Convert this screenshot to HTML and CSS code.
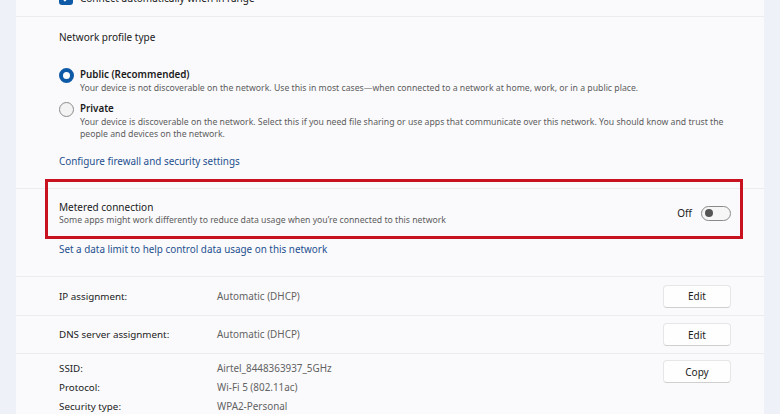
FILE: index.html
```html
<!DOCTYPE html>
<html lang="en">
<head>
<meta charset="utf-8">
<title>Network properties</title>
<link rel="stylesheet" href="styles.css">
</head>
<body>
<div class="shell">
  <div class="side"></div>
  <main class="card">
    <section class="sec sec-top">
      <div class="check-row">
        <span class="checkbox">
          <svg viewBox="0 0 14 14" width="14" height="14"><path d="M3.5 7.2 L6 9.6 L10.6 4.6" fill="none" stroke="#fff" stroke-width="1.5" stroke-linecap="round" stroke-linejoin="round"/></svg>
        </span>
        <span class="title">Connect automatically when in range</span>
      </div>
    </section>

    <section class="sec sec-profile">
      <div class="title heading">Network profile type</div>
      <div class="radio-row">
        <span class="radio on"></span>
        <div class="radio-text">
          <div class="title strong">Public (Recommended)</div>
          <div class="desc">Your device is not discoverable on the network. Use this in most cases—when connected to a network at home, work, or in a public place.</div>
        </div>
      </div>
      <div class="radio-row second">
        <span class="radio"></span>
        <div class="radio-text">
          <div class="title strong">Private</div>
          <div class="desc">Your device is discoverable on the network. Select this if you need file sharing or use apps that communicate over this network. You should know and trust the people and devices on the network.</div>
        </div>
      </div>
      <a class="link link-fw" href="#">Configure firewall and security settings</a>
    </section>

    <section class="sec sec-metered">
      <div class="metered-row">
        <div class="metered-text">
          <div class="title">Metered connection</div>
          <div class="desc">Some apps might work differently to reduce data usage when you’re connected to this network</div>
        </div>
        <div class="toggle-wrap">
          <span class="toggle-label">Off</span>
          <span class="toggle"><span class="knob"></span></span>
        </div>
      </div>
      <a class="link link-limit" href="#">Set a data limit to help control data usage on this network</a>
      <div class="highlight"></div>
    </section>

    <section class="sec prop-row">
      <span class="label">IP assignment:</span>
      <span class="value">Automatic (DHCP)</span>
      <button class="btn">Edit</button>
    </section>
    <section class="sec prop-row">
      <span class="label">DNS server assignment:</span>
      <span class="value">Automatic (DHCP)</span>
      <button class="btn">Edit</button>
    </section>
    <section class="sec props">
      <div class="props-grid">
        <span class="label">SSID:</span><span class="value">Airtel_8448363937_5GHz</span>
        <span class="label">Protocol:</span><span class="value">Wi-Fi 5 (802.11ac)</span>
        <span class="label">Security type:</span><span class="value">WPA2-Personal</span>
      </div>
      <button class="btn">Copy</button>
    </section>
  </main>
  <div class="side"></div>
</div>
</body>
</html>
```

FILE: styles.css
```css
* { box-sizing: border-box; }
html, body { margin: 0; padding: 0; }
body {
  width: 780px;
  height: 414px;
  overflow: hidden;
  font-family: "Noto Sans", "Open Sans", sans-serif;
  color: #1b1b1b;
  background: #eef1f7;
}
.shell {
  display: flex;
  height: 414px;
}
.side {
  width: 16px;
  flex: 0 0 16px;
  background: #eef1f7;
}
.card {
  flex: 1;
  background: #fafafc;
  display: flex;
  flex-direction: column;
  overflow: hidden;
}
.sec {
  flex-shrink: 0;
  border-bottom: 1px solid #ececef;
  padding: 0 33px 0 43px;
}
.title { font-size: 10px; line-height: 14px; color: #1b1b1b; }
.strong { font-weight: 600; font-size: 9.8px; }
.desc { font-size: 8.7px; line-height: 12px; color: #5d5d5d; }

/* top */
.sec-top {
  height: 17px;
}
.check-row {
  display: flex;
  align-items: center;
  gap: 7px;
  margin-top: -9px;
}
.checkbox {
  width: 14px;
  height: 14px;
  border-radius: 3px;
  background: #0f5aa6;
  display: flex;
}

/* profile */
.sec-profile {
  height: 172px;
  padding-top: 13px;
}
.heading { margin-bottom: 24px; }
.radio-row {
  display: flex;
  gap: 6px;
  align-items: flex-start;
}
.radio-row.second { margin-top: 8px; }
.radio-text .desc { max-width: 650px; }
.radio {
  width: 15px;
  height: 15px;
  flex: 0 0 15px;
  border-radius: 50%;
  border: 1px solid #8a8a8a;
  background: #f3f3f3;
}
.radio.on {
  border: 4px solid #0f5aa6;
  background: #fff;
}
.link {
  display: inline-block;
  font-size: 9.9px;
  line-height: 14px;
  color: #1d4f8e;
  text-decoration: none;
}
.link-fw { margin-top: 14px; }

/* metered */
.sec-metered {
  position: relative;
  height: 88px;
  padding-top: 11px;
}
.metered-row {
  display: flex;
  align-items: center;
  justify-content: space-between;
}
.toggle-wrap {
  display: flex;
  align-items: center;
  gap: 9px;
}
.toggle-label { font-size: 10px; color: #1b1b1b; }
.toggle {
  width: 30px;
  height: 15px;
  border: 1px solid #8a8a8a;
  border-radius: 8px;
  background: #f6f6f6;
  display: flex;
  align-items: center;
  padding-left: 3px;
}
.knob {
  width: 8px;
  height: 8px;
  border-radius: 50%;
  background: #555;
}
.link-limit { margin-top: 16px; }
.highlight {
  position: absolute;
  left: 29px;
  top: -10px;
  width: 698px;
  height: 60px;
  border: 3px solid #c8121f;
  pointer-events: none;
}

/* properties */
.prop-row {
  display: flex;
  align-items: center;
  height: 39px;
}
.prop-row + .prop-row { height: 38px; }
.label {
  font-size: 9.8px;
  line-height: 19px;
  color: #1b1b1b;
  width: 158px;
  flex: 0 0 158px;
}
.value {
  font-size: 9.9px;
  line-height: 19px;
  color: #626262;
  flex: 1;
}
.btn {
  width: 68px;
  height: 23px;
  font-family: inherit;
  font-size: 10px;
  color: #1b1b1b;
  background: #fefefe;
  border: 1px solid #e6e6e6;
  border-bottom-color: #cfcfcf;
  border-radius: 4px;
  padding: 0;
}
.props {
  display: flex;
  align-items: flex-start;
  border-bottom: none;
  padding-top: 5px;
  flex: 1 0 auto;
}
.props-grid {
  display: grid;
  grid-template-columns: 158px 1fr;
  flex: 1;
}
.props .btn { margin-top: 1px; }
```
